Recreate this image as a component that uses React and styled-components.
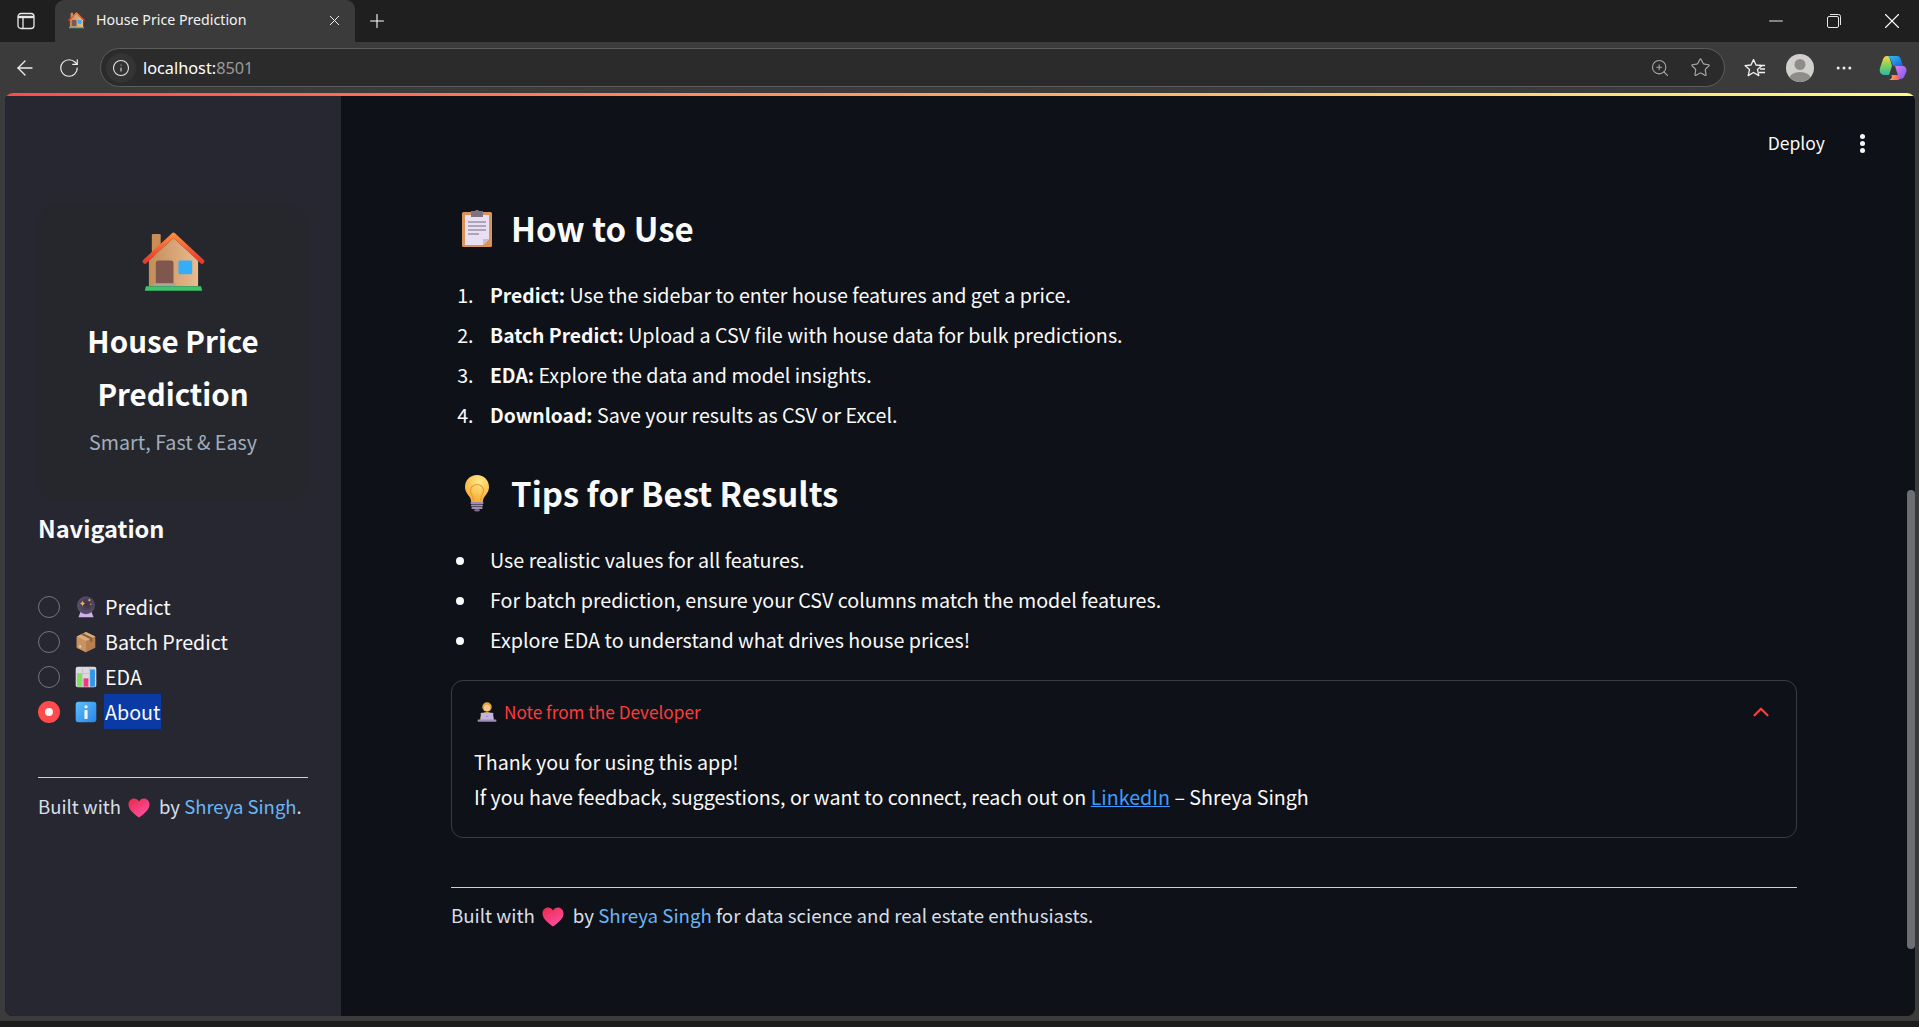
import React from 'react'
import styled, { createGlobalStyle } from 'styled-components'
import { ArrowLeft, RotateCw, Info, ZoomIn, Star, Plus, X, Minus, ChevronUp, MoreHorizontal } from 'lucide-react'

const GlobalStyle = createGlobalStyle`
  html, body {
    margin: 0;
    height: 100%;
    overflow: hidden;
    background: #3b3b3b;
  }
  #root {
    height: 100%;
  }
`

const sans = `'Noto Sans CJK SC', 'Liberation Sans', sans-serif`
const uiSans = `'Noto Sans', 'Open Sans', sans-serif`

const Window = styled.div`
  height: 100%;
  display: flex;
  flex-direction: column;
  font-family: ${sans};
  color: #fafafa;
`
const TabStrip = styled.div`
  height: 42px;
  flex: none;
  background: #1f1f1f;
  display: flex;
  align-items: flex-end;
  color: #fff;
`
const SideToggle = styled.div`
  width: 52px;
  height: 42px;
  margin-right: 3px;
  display: flex;
  align-items: center;
  justify-content: center;
  svg { margin-top: -1px; }
`
const Tab = styled.div`
  width: 300px;
  height: 42px;
  box-sizing: border-box;
  padding: 0 12px 2px 13px;
  background: #3b3b3b;
  border-radius: 9px 9px 0 0;
  display: flex;
  align-items: center;
  gap: 11px;
  font: 14.2px/20px ${uiSans};
  color: #f2f2f2;
`
const TabTitle = styled.span`
  flex: 1;
`
const NewTab = styled.div`
  margin-left: 11px;
  height: 42px;
  display: flex;
  align-items: center;
`
const WindowButtons = styled.div`
  margin: 0 -2px 0 auto;
  height: 42px;
  display: flex;
  align-items: center;
`
const WindowButton = styled.div`
  width: 58px;
  display: flex;
  align-items: center;
  justify-content: center;
`
const Toolbar = styled.div`
  height: 51px;
  flex: none;
  background: #3b3b3b;
  display: flex;
  align-items: center;
  padding: 0 12px 0 13px;
  color: #f0f0f0;
`
const NavIcons = styled.div`
  width: 87px;
  display: flex;
  align-items: center;
  gap: 21px;
`
const UrlBar = styled.div`
  width: 1625px;
  height: 39px;
  box-sizing: border-box;
  border: 1px solid #5c5c5c;
  border-radius: 20px;
  background: #2b2b2b;
  display: flex;
  align-items: center;
  padding: 0 13px 0 5px;
  font: 16.3px/20px ${uiSans};
`
const SiteChip = styled.div`
  width: 30px;
  height: 30px;
  border-radius: 50%;
  background: #343434;
  display: flex;
  align-items: center;
  justify-content: center;
  margin-right: 7px;
`
const Host = styled.span`
  color: #fff;
`
const Port = styled.span`
  color: #9a9a9a;
`
const UrlIcons = styled.div`
  margin-left: auto;
  display: flex;
  align-items: center;
  gap: 20px;
  color: #a8a8a8;
`
const ToolIcons = styled.div`
  margin-left: 19px;
  flex: 1;
  display: flex;
  align-items: center;
  gap: 20px;
  svg:last-child { margin-left: auto; }
`
const Viewport = styled.div`
  flex: 1;
  min-height: 0;
  margin: 0 4px 0 5px;
  border-radius: 8px;
  overflow: hidden;
  display: flex;
  flex-direction: column;
  background: #0e1117;
`
const Stripe = styled.div`
  height: 3px;
  flex: none;
  background: linear-gradient(90deg, #ff4b4b, #fffd80);
`
const AppBody = styled.div`
  flex: 1;
  min-height: 0;
  display: flex;
  position: relative;
`
const Sidebar = styled.aside`
  width: 336px;
  flex: none;
  box-sizing: border-box;
  background: #262730;
  padding: 109px 33px 0;
`
const BrandCard = styled.div`
  height: 295px;
  box-sizing: border-box;
  padding-top: 26px;
  border-radius: 20px;
  background: #25272d;
  text-align: center;
`
const BrandTitle = styled.h1`
  margin: 15px 0 0;
  font-size: 29.5px;
  line-height: 53px;
  font-weight: 700;
  color: #fff;
`
const BrandSub = styled.div`
  margin-top: 7px;
  font-size: 19.7px;
  line-height: 30px;
  color: #a0aebd;
`
const NavTitle = styled.h3`
  margin: 13px 0 0;
  font-size: 23.6px;
  line-height: 30px;
  font-weight: 600;
  color: #fafafa;
`
const NavList = styled.div`
  margin-top: 46px;
  display: flex;
  flex-direction: column;
`
const NavRow = styled.div`
  height: 35px;
  display: flex;
  align-items: center;
  font-size: 19.7px;
`
const Radio = styled.span`
  width: 22px;
  height: 22px;
  flex: none;
  box-sizing: border-box;
  border-radius: 50%;
  border: ${p => (p.$on ? '7px solid #ff4b4b' : '1.5px solid #74757c')};
  background: ${p => (p.$on ? '#f5f5f5' : 'transparent')};
  margin-right: 15px;
`
const NavLabel = styled.span`
  margin-left: 7px;
  padding: 0 1px;
  line-height: 35px;
  background: ${p => (p.$selected ? '#0a3aa6' : 'transparent')};
`
const Rule = styled.hr`
  margin: 0;
  border: 0;
  height: 1px;
  background: #cfcfcf;
`
const SideRule = styled(Rule)`
  margin-top: 48px;
`
const Credit = styled.p`
  margin: ${p => p.$top}px 0 0;
  font-size: ${p => p.$size}px;
  line-height: 30px;
  color: #d8dfe6;
  white-space: nowrap;
  svg { margin: 0 9px 0 7px; vertical-align: -4px; }
`
const CreditLink = styled.a`
  color: #6cb6f5;
`
const Main = styled.main`
  flex: 1;
  box-sizing: border-box;
  padding: 106px 0 0 110px;
  position: relative;
`
const Header = styled.div`
  position: absolute;
  top: 33px;
  right: 50px;
  display: flex;
  align-items: center;
  gap: 35px;
  font-size: 17.5px;
  line-height: 28px;
`
const Kebab = styled.div`
  width: 5px;
  display: flex;
  flex-direction: column;
  gap: 2px;
  span {
    width: 5px;
    height: 5px;
    border-radius: 50%;
    background: #f5f5f5;
  }
`
const Scrollbar = styled.div`
  position: absolute;
  right: 0;
  top: 394px;
  width: 8px;
  height: 459px;
  border-radius: 4px;
  background: #6d6e72;
`
const Content = styled.div`
  width: 1346px;
`
const Heading = styled.h2`
  margin: ${p => p.$top}px 0 0;
  height: 52px;
  display: flex;
  align-items: center;
  font-size: 33px;
  font-weight: 600;
  line-height: 52px;
  color: #fafafa;
`
const EmojiSlot = styled.span`
  width: 52px;
  margin-right: 8px;
  flex: none;
  display: flex;
  justify-content: center;
`
const List = styled.ol`
  margin: 26px 0 0;
  padding: 0 0 0 27px;
  font-size: 19.72px;
  line-height: 30px;
  list-style-type: ${p => p.$marker};
  li {
    margin-bottom: 10px;
    padding-left: 12px;
  }
  strong {
    font-size: 19.3px;
    font-weight: 600;
  }
`
const Expander = styled.section`
  margin-top: 25px;
  height: 158px;
  box-sizing: border-box;
  border: 1px solid #3a3c43;
  border-radius: 12px;
  padding: 0 22px;
`
const ExpanderHead = styled.div`
  height: 64px;
  box-sizing: border-box;
  padding-bottom: 3px;
  display: flex;
  align-items: center;
  color: #ff3b3b;
  font-size: 17.2px;
  svg:first-child { margin: 0 7px 0 3px; }
  svg:last-child { margin: 0 0 0 auto; }
`
const ExpanderBody = styled.div`
  font-size: 19.67px;
  line-height: 34.5px;
  color: #fafafa;
`
const Anchor = styled.a`
  color: #3d9bff;
  text-decoration: underline;
`
const MainRule = styled(Rule)`
  margin-top: 49px;
`
const BottomBar = styled.div`
  height: 11px;
  flex: none;
  background: linear-gradient(#3b3b3b 0 5px, #1c1c1c 5px);
`

// emoji drawings
const HouseEmoji = ({ size }) => (
  <svg width={size} height={size} viewBox="0 0 32 32">
    <defs>
      <linearGradient id="wall" x1="0" x2="1" y1="0" y2="0">
        <stop offset="0" stopColor="#c48d58" />
        <stop offset="1" stopColor="#e9bb90" />
      </linearGradient>
      <linearGradient id="roof" x1="0.500" x2="0.500" y1="0" y2="1">
        <stop offset="0" stopColor="#ff8a3c" />
        <stop offset="1" stopColor="#e5392e" />
      </linearGradient>
    </defs>
    <rect x="5" y="1.500" width="4.500" height="11" rx="0.600" fill="#c98d56" />
    <path d="M3.500 15 16 3.500 28.500 15v13h-25z" fill="url(#wall)" />
    <path d="M1.500 15.500 16 2 30.500 15.500" fill="none" stroke="url(#roof)" strokeWidth="2.300" strokeLinecap="round" strokeLinejoin="round" />
    <rect x="7" y="15" width="9" height="12.500" rx="1.300" fill="#80574f" />
    <rect x="18.500" y="15" width="7" height="7" rx="0.800" fill="#35aef8" />
    <rect x="6" y="26.500" width="11" height="1.500" fill="#a9a3a0" />
    <path d="M2 28h28l.6 2.400H1.400z" fill="#3cc46a" />
  </svg>
)

const CrystalEmoji = () => (
  <svg width="22" height="22" viewBox="0 0 32 32">
    <defs>
      <radialGradient id="ball" cx="0.550" cy="0.450" r="0.600">
        <stop offset="0" stopColor="#3a3048" />
        <stop offset="1" stopColor="#5f5270" />
      </radialGradient>
    </defs>
    <path d="M8 23h16l3 8H5z" fill="#cdb4e4" />
    <circle cx="16" cy="13.500" r="13" fill="url(#ball)" />
    <path d="M11 6.500c.7 3 1.500 3.700 4 4.500-2.500.8-3.300 1.500-4 4.500-.7-3-1.500-3.700-4-4.500 2.500-.8 3.300-1.500 4-4.500z" fill="#f7b044" />
    <circle cx="21" cy="6" r="1.500" fill="#f7b044" />
    <circle cx="23" cy="12" r="1" fill="#f7b044" />
  </svg>
)

const BoxEmoji = () => (
  <svg width="22" height="22" viewBox="0 0 32 32">
    <path d="M16 1.500 29.500 8v16.500L16 31 2.500 24.500V8z" fill="#b67f50" />
    <path d="M2.500 8 16 14.500V31L2.500 24.500z" fill="#c9925f" />
    <path d="M16 1.500 29.500 8 16 14.500 2.500 8z" fill="#dcae7d" />
    <path d="M8.500 5 22 11.500v5l3.500-1.700v-5L12 3.300z" fill="#8f6040" />
    <rect x="6" y="21" width="3" height="3" fill="#e4d6c8" />
  </svg>
)

const ChartEmoji = () => (
  <svg width="22" height="22" viewBox="0 0 32 32">
    <rect x="1" y="1" width="30" height="30" rx="3" fill="#dcd9e0" />
    <path d="M11 1v30M21 1v30M1 11h30M1 21h30" stroke="#b9b5bf" strokeWidth="0.800" />
    <rect x="3" y="11" width="7" height="19" fill="#7ee05c" />
    <rect x="12.500" y="18" width="7" height="12" fill="#f0387e" />
    <rect x="22" y="5" width="7" height="25" fill="#2f96ea" />
  </svg>
)

const InfoEmoji = () => (
  <svg width="22" height="22" viewBox="0 0 32 32">
    <defs>
      <linearGradient id="infoBg" x1="0" x2="1" y1="0" y2="1">
        <stop offset="0" stopColor="#5cc0fa" />
        <stop offset="1" stopColor="#2a84e8" />
      </linearGradient>
    </defs>
    <rect x="1" y="1" width="30" height="30" rx="4" fill="url(#infoBg)" />
    <circle cx="16" cy="8.500" r="2.400" fill="#f4f4fb" />
    <rect x="13.700" y="13" width="4.600" height="13" rx="1" fill="#f4f4fb" />
  </svg>
)

const ClipboardEmoji = () => (
  <svg width="32" height="38" viewBox="0 0 32 38">
    <rect x="1" y="3" width="30" height="35" rx="1.500" fill="#d9935c" />
    <path d="M4 6h24v24l-6 6H4z" fill="#e8dff2" />
    <path d="M22 36v-6h6z" fill="#c9bcd6" />
    <path d="M10 1.500h4c.5-1.300 3.500-1.300 4 0h4v6H10z" fill="#7c7280" transform="translate(0 .5)" />
    <path d="M7 13h18M7 17h18M7 21h18M7 25h11" stroke="#9c93a6" strokeWidth="1.300" />
  </svg>
)

const BulbEmoji = () => (
  <svg width="26" height="38" viewBox="0 0 26 38">
    <defs>
      <radialGradient id="bulb" cx="0.600" cy="0.250" r="0.800">
        <stop offset="0" stopColor="#ffe98a" />
        <stop offset="1" stopColor="#f8a92e" />
      </radialGradient>
    </defs>
    <path d="M13 1C6 1 1 6.200 1 12.800c0 4.700 2.500 7.200 4.500 10 1.300 1.900 1.500 3.400 1.700 5.200h11.600c.2-1.800.4-3.300 1.700-5.200 2-2.800 4.500-5.300 4.500-10C25 6.200 20 1 13 1z" fill="url(#bulb)" />
    <path d="M9.500 27c0-5-3-7-3-10.500a6.500 6 0 0 1 13 0C19.500 20 16.500 22 16.500 27" fill="none" stroke="#ef9a2c" strokeWidth="1.200" />
    <path d="M7.500 29h11M8 31.500h10M8.500 34h9" stroke="#a18db3" strokeWidth="2.200" strokeLinecap="round" />
    <ellipse cx="13" cy="36.300" rx="3" ry="1.300" fill="#7e6d8e" />
  </svg>
)

const DevEmoji = () => (
  <svg width="20" height="20" viewBox="0 0 32 32">
    <circle cx="16" cy="8" r="7.500" fill="#e2a83a" />
    <circle cx="16" cy="9.500" r="5" fill="#f7c68f" />
    <path d="M5 30c0-8 3-14 11-14s11 6 11 14z" fill="#d6a73f" />
    <rect x="6" y="17" width="20" height="12" rx="1.500" fill="#c5b3de" />
    <rect x="1" y="28" width="30" height="3.500" rx="1" fill="#9d8bb8" />
    <circle cx="16" cy="23" r="1.200" fill="#8f7cab" />
  </svg>
)

const HeartEmoji = () => (
  <svg width="22" height="20" viewBox="0 0 22 20">
    <defs>
      <linearGradient id="heart" x1="0" x2="0.700" y1="0" y2="1">
        <stop offset="0" stopColor="#e8294a" />
        <stop offset="1" stopColor="#ff4fa0" />
      </linearGradient>
    </defs>
    <path d="M11 19.500C4 14.500.5 11 .5 6.300.5 3 3 .5 6 .5c2.200 0 4 1.200 5 3 1-1.800 2.800-3 5-3 3 0 5.500 2.500 5.500 5.800C21.500 11 18 14.500 11 19.500z" fill="url(#heart)" />
  </svg>
)

const PanelIcon = () => (
  <svg width="18" height="18" viewBox="0 0 18 18" fill="none" stroke="#e8e8e8" strokeWidth="1.300">
    <rect x="1" y="1.500" width="16" height="15" rx="3" />
    <path d="M6 5v11.500" />
    <path d="M1 5h16" strokeWidth="2.400" />
  </svg>
)

const RestoreIcon = () => (
  <svg width="14" height="14" viewBox="0 0 14 14" fill="none" stroke="#e8e8e8" strokeWidth="1">
    <rect x="0.500" y="2.500" width="11" height="11" rx="1.500" />
    <path d="M3 .5h8.500a2 2 0 0 1 2 2V11" />
  </svg>
)

const FavoritesIcon = () => (
  <svg width="22" height="22" viewBox="0 0 22 22" fill="none" stroke="#f2f2f2" strokeWidth="1.300" strokeLinejoin="round">
    <path d="M9.500 2.500 12 8l6 .6-4.500 4 1.300 6-5.300-3.100-5.300 3.100 1.300-6-4.500-4L7 8z" />
    <path d="M15 8.500h6M16 12h5M15 15.500h6" />
  </svg>
)

const Avatar = () => (
  <svg width="28" height="28" viewBox="0 0 28 28">
    <defs>
      <clipPath id="avatarClip"><circle cx="14" cy="14" r="14" /></clipPath>
    </defs>
    <g clipPath="url(#avatarClip)">
      <rect width="28" height="28" fill="#d1d0cc" />
      <circle cx="14" cy="10.500" r="5.500" fill="#8f8d89" />
      <ellipse cx="14" cy="25" rx="11" ry="7" fill="#8f8d89" />
    </g>
  </svg>
)

const CopilotLogo = () => (
  <svg width="28" height="28" viewBox="0 0 28 28">
    <defs>
      <linearGradient id="copA" x1="0" x2="1" y1="0" y2="1">
        <stop offset="0" stopColor="#2fc3f0" />
        <stop offset="1" stopColor="#1a5fd6" />
      </linearGradient>
      <linearGradient id="copB" x1="0" x2="0" y1="0" y2="1">
        <stop offset="0" stopColor="#ffd24a" />
        <stop offset="0.500" stopColor="#7fd15a" />
        <stop offset="1" stopColor="#2fb8a8" />
      </linearGradient>
      <linearGradient id="copC" x1="0" x2="1" y1="0" y2="1">
        <stop offset="0" stopColor="#d77bf0" />
        <stop offset="1" stopColor="#7a5cf0" />
      </linearGradient>
      <linearGradient id="copD" x1="0" x2="1" y1="0" y2="0">
        <stop offset="0" stopColor="#ffb03a" />
        <stop offset="1" stopColor="#f0527c" />
      </linearGradient>
    </defs>
    <path d="M8 2h10c2 0 3 1 3.500 2.500L24 12H14L11.500 5C11 3.500 9.500 2.500 8 2z" fill="url(#copA)" />
    <path d="M8 2c-2 0-3.200 1.200-4 3.300L1 14c-1 3 .5 7 4 7h5l3-9-2-7C10.500 3.500 9.500 2 8 2z" fill="url(#copB)" />
    <path d="M16 12h7.500c2.500 0 4.500 2 4 5l-1.800 4.500c-.7 2-2 3.500-4.700 3.500-1 0-1-.5-1.300-1.500z" fill="url(#copC)" />
    <path d="M10 21h9.500l1.200 4c-.6 .6-1.200 1-2.200 1H10c1.500-.5 2.500-1.300 3-3l-.5-2z" fill="url(#copD)" />
  </svg>
)

const navItems = [
  { label: 'Predict', Icon: CrystalEmoji },
  { label: 'Batch Predict', Icon: BoxEmoji },
  { label: 'EDA', Icon: ChartEmoji },
  { label: 'About', Icon: InfoEmoji, selected: true },
]

const App = () => {
  return (
    <Window>
      <GlobalStyle />
      <TabStrip>
        <SideToggle><PanelIcon /></SideToggle>
        <Tab>
          <HouseEmoji size={17} />
          <TabTitle>House Price Prediction</TabTitle>
          <X size={17} strokeWidth={1.4} />
        </Tab>
        <NewTab><Plus size={22} strokeWidth={1.2} /></NewTab>
        <WindowButtons>
          <WindowButton><Minus size={22} strokeWidth={1} /></WindowButton>
          <WindowButton><RestoreIcon /></WindowButton>
          <WindowButton><X size={26} strokeWidth={1} /></WindowButton>
        </WindowButtons>
      </TabStrip>
      <Toolbar>
        <NavIcons>
          <ArrowLeft size={24} strokeWidth={1.3} />
          <RotateCw size={22} strokeWidth={1.3} />
        </NavIcons>
        <UrlBar>
          <SiteChip><Info size={18} strokeWidth={1.4} color="#e6e6e6" /></SiteChip>
          <Host>localhost:</Host>
          <Port>8501</Port>
          <UrlIcons>
            <ZoomIn size={20} strokeWidth={1.3} />
            <Star size={21} strokeWidth={1.3} />
          </UrlIcons>
        </UrlBar>
        <ToolIcons>
          <FavoritesIcon />
          <Avatar />
          <MoreHorizontal size={20} strokeWidth={1.6} />
          <CopilotLogo />
        </ToolIcons>
      </Toolbar>
      <Viewport>
        <Stripe />
        <AppBody>
          <Sidebar>
            <BrandCard>
              <HouseEmoji size={63} />
              <BrandTitle>House Price<br />Prediction</BrandTitle>
              <BrandSub>Smart, Fast &amp; Easy</BrandSub>
            </BrandCard>
            <NavTitle>Navigation</NavTitle>
            <NavList>
              {navItems.map(({ label, Icon, selected }) => (
                <NavRow key={label}>
                  <Radio $on={selected} />
                  <Icon />
                  <NavLabel $selected={selected}>{label}</NavLabel>
                </NavRow>
              ))}
            </NavList>
            <SideRule />
            <Credit $top={13} $size={18.5}>
              Built with<HeartEmoji />by <CreditLink>Shreya Singh</CreditLink>.
            </Credit>
          </Sidebar>
          <Main>
            <Header>
              <span>Deploy</span>
              <Kebab><span /><span /><span /></Kebab>
            </Header>
            <Content>
              <Heading $top={0}><EmojiSlot><ClipboardEmoji /></EmojiSlot>How to Use</Heading>
              <List as="ol" $marker="decimal">
                <li><strong>Predict:</strong> Use the sidebar to enter house features and get a price.</li>
                <li><strong>Batch Predict:</strong> Upload a CSV file with house data for bulk predictions.</li>
                <li><strong>EDA:</strong> Explore the data and model insights.</li>
                <li><strong>Download:</strong> Save your results as CSV or Excel.</li>
              </List>
              <Heading $top={37}><EmojiSlot><BulbEmoji /></EmojiSlot>Tips for Best Results</Heading>
              <List as="ul" $marker="disc">
                <li>Use realistic values for all features.</li>
                <li>For batch prediction, ensure your CSV columns match the model features.</li>
                <li>Explore EDA to understand what drives house prices!</li>
              </List>
              <Expander>
                <ExpanderHead>
                  <DevEmoji />
                  Note from the Developer
                  <ChevronUp size={26} strokeWidth={2} />
                </ExpanderHead>
                <ExpanderBody>
                  Thank you for using this app!<br />
                  If you have feedback, suggestions, or want to connect, reach out on <Anchor>LinkedIn</Anchor> – Shreya Singh
                </ExpanderBody>
              </Expander>
              <MainRule />
              <Credit $top={12} $size={18.7}>
                Built with<HeartEmoji />by <CreditLink>Shreya Singh</CreditLink> for data science and real estate enthusiasts.
              </Credit>
            </Content>
            <Scrollbar />
          </Main>
        </AppBody>
      </Viewport>
      <BottomBar />
    </Window>
  )
}

export default App
